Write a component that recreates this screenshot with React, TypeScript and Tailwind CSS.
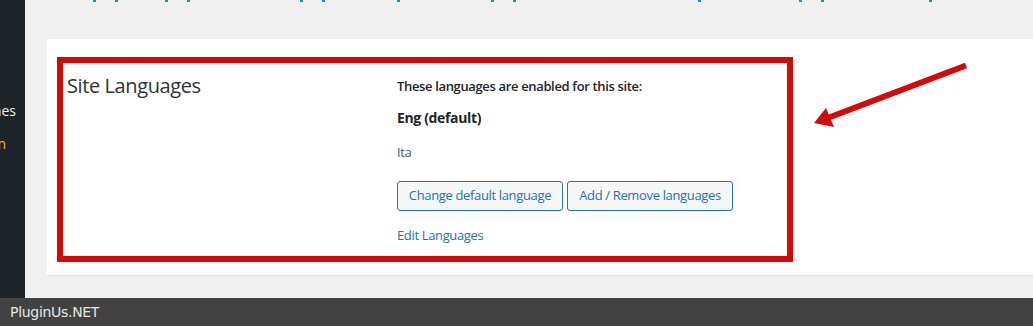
import * as React from 'react'

const wpFont = { fontFamily: '"Open Sans", "Noto Sans", sans-serif' }

// descender bits of the link row scrolled out of view above
const topMarks = [
	'ml-[68px]',
	'ml-[19px]',
	'ml-[47px]',
	'ml-[19px]',
	'ml-[110px]',
	'ml-[19px]',
	'ml-[72px]',
	'ml-[91px]',
	'ml-[19px]',
	'ml-[182px]',
	'ml-[98px]',
	'ml-[19px]',
	'ml-[105px]',
]

function Sidebar() {
	return (
		<div className="flex w-[25px] shrink-0 flex-col overflow-hidden bg-[#1d2327] pt-[102px] text-[14px] leading-[18px]">
			<div className="flex justify-end overflow-hidden whitespace-nowrap pr-[9px] text-[#f0f0f1]">
				Themes
			</div>
			<div className="mt-[15px] flex justify-end overflow-hidden whitespace-nowrap pr-[19px] text-[#f0b849]">
				Design
			</div>
		</div>
	)
}

function LanguagesRow() {
	return (
		<div className="flex h-[205px] w-[736px] border-[6px] border-[#d20a0a]">
			<div className="w-[334px] shrink-0 pl-[4px] pt-[10px] text-[20px] leading-[26px] tracking-[-0.4px] text-[#2c3338]">
				Site Languages
			</div>
			<div className="flex flex-col pt-[14px] text-[13px] tracking-[-0.35px] text-[#3c434a]">
				<p className="font-semibold leading-[18px] text-[#1d2327]">
					These languages are enabled for this site:
				</p>
				<p className="mt-[14px] text-[14px] font-bold leading-[18px] text-[#1d2327]">
					Eng (default)
				</p>
				<p className="mt-[16px] leading-[18px] text-[#50575e]">Ita</p>
				<div className="mt-[20px] flex gap-[4px]">
					<button className="h-[30px] w-[166px] rounded-[3px] border border-[#2271b1] bg-[#f6f7f7] text-[13px] tracking-[-0.35px] text-[#2271b1]">
						Change default language
					</button>
					<button className="h-[30px] w-[166px] rounded-[3px] border border-[#2271b1] bg-[#f6f7f7] text-[13px] tracking-[-0.35px] text-[#2271b1]">
						Add / Remove languages
					</button>
				</div>
				<a className="mt-[15px] leading-[18px] text-[#2271b1]">Edit Languages</a>
			</div>
		</div>
	)
}

export default function App() {
	return (
		<div className="flex h-[326px] w-[1033px] flex-col overflow-hidden" style={wpFont}>
			<div className="flex h-[298px]">
				<Sidebar />
				<div className="relative flex flex-1 flex-col bg-[#f0f0f0]">
					<div className="flex h-[2px]">
						{topMarks.map((ml, i) => (
							<span key={i} className={`${ml} h-[2px] w-[3px] shrink-0 bg-[#2a87c2]`} />
						))}
					</div>
					<div className="ml-[22px] mt-[37px] h-[237px] border-b border-[#e3e3e3] bg-white pl-[10px] pt-[18px]">
						<LanguagesRow />
					</div>
					<svg
						className="absolute left-[760px] top-[58px]"
						width="190"
						height="75"
						viewBox="785 58 190 75"
					>
						<line
							x1="966"
							y1="65.5"
							x2="829"
							y2="117.5"
							stroke="#d40a0a"
							strokeWidth="6"
						/>
						<polygon points="814,123 826,108 834,127" fill="#d40a0a" />
					</svg>
				</div>
			</div>
			<div
				className="flex h-[28px] items-center bg-[#424242] pl-[10px] text-[14px] tracking-[-0.3px] text-[#e6e6e6]"
				style={{ fontFamily: '"DejaVu Sans", sans-serif' }}
			>
				PluginUs.NET
			</div>
		</div>
	)
}
